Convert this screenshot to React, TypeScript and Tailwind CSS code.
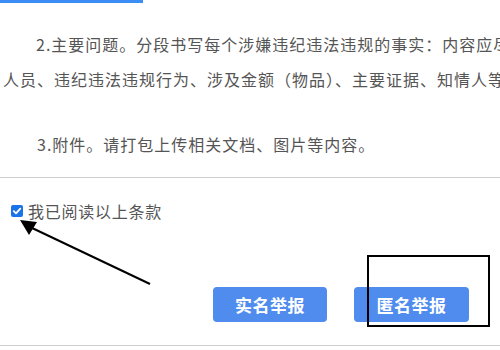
import React from "react";

export default function App() {
  const font = { fontFamily: '"Noto Sans CJK SC", "Noto Sans", sans-serif' };
  return (
    <div className="relative w-[500px] h-[350px] overflow-hidden bg-white" style={font}>
      <div className="h-[3px] w-[143px] bg-[#3b8cf5]" />
      <div className="pt-[24px] pl-[3px] text-[16px] leading-[35px] tracking-[1px] text-[#555] whitespace-nowrap overflow-hidden">
        <div className="pl-[33px]">2.主要问题。分段书写每个涉嫌违纪违法违规的事实：内容应尽</div>
        <div>人员、违纪违法违规行为、涉及金额（物品）、主要证据、知情人等</div>
        <div className="mt-[30px] pl-[34px]">3.附件。请打包上传相关文档、图片等内容。</div>
      </div>
      <div className="mt-[15px] h-px bg-[#cfcfcf]" />
      <div className="mt-[23px] flex items-center h-[20px] pl-[11px]">
        <div className="w-[12px] h-[12px] rounded-[2px] bg-[#1a73e8] flex items-center justify-center">
          <svg width="10" height="10" viewBox="0 0 10 10">
            <path d="M1.8 5.2 L4 7.4 L8.3 2.6" fill="none" stroke="white" strokeWidth="1.8" strokeLinecap="round" strokeLinejoin="round" />
          </svg>
        </div>
        <span className="ml-[5px] text-[16px] tracking-[0.75px] text-[#555]">我已阅读以上条款</span>
      </div>
      <div className="mt-[66px] flex justify-end gap-[27px] pr-[31px]">
        <button className="w-[114px] h-[35px] rounded-[4px] bg-[#4f8cee] text-white font-bold text-[17px] tracking-[0.5px]">实名举报</button>
        <button className="w-[115px] h-[35px] rounded-[4px] bg-[#4f8cee] text-white font-bold text-[17px] tracking-[0.5px]">匿名举报</button>
      </div>
      <div className="mt-[23px] h-px bg-[#cfcfcf]" />
      <div className="absolute left-[367px] top-[255px] w-[123px] h-[72px] border-2 border-black" />
      <svg className="absolute left-0 top-0" width="500" height="350" viewBox="0 0 500 350">
        <line x1="150" y1="284" x2="30" y2="227" stroke="black" strokeWidth="2" />
        <polygon points="20,220 29,235 37,222" fill="black" />
      </svg>
    </div>
  );
}
